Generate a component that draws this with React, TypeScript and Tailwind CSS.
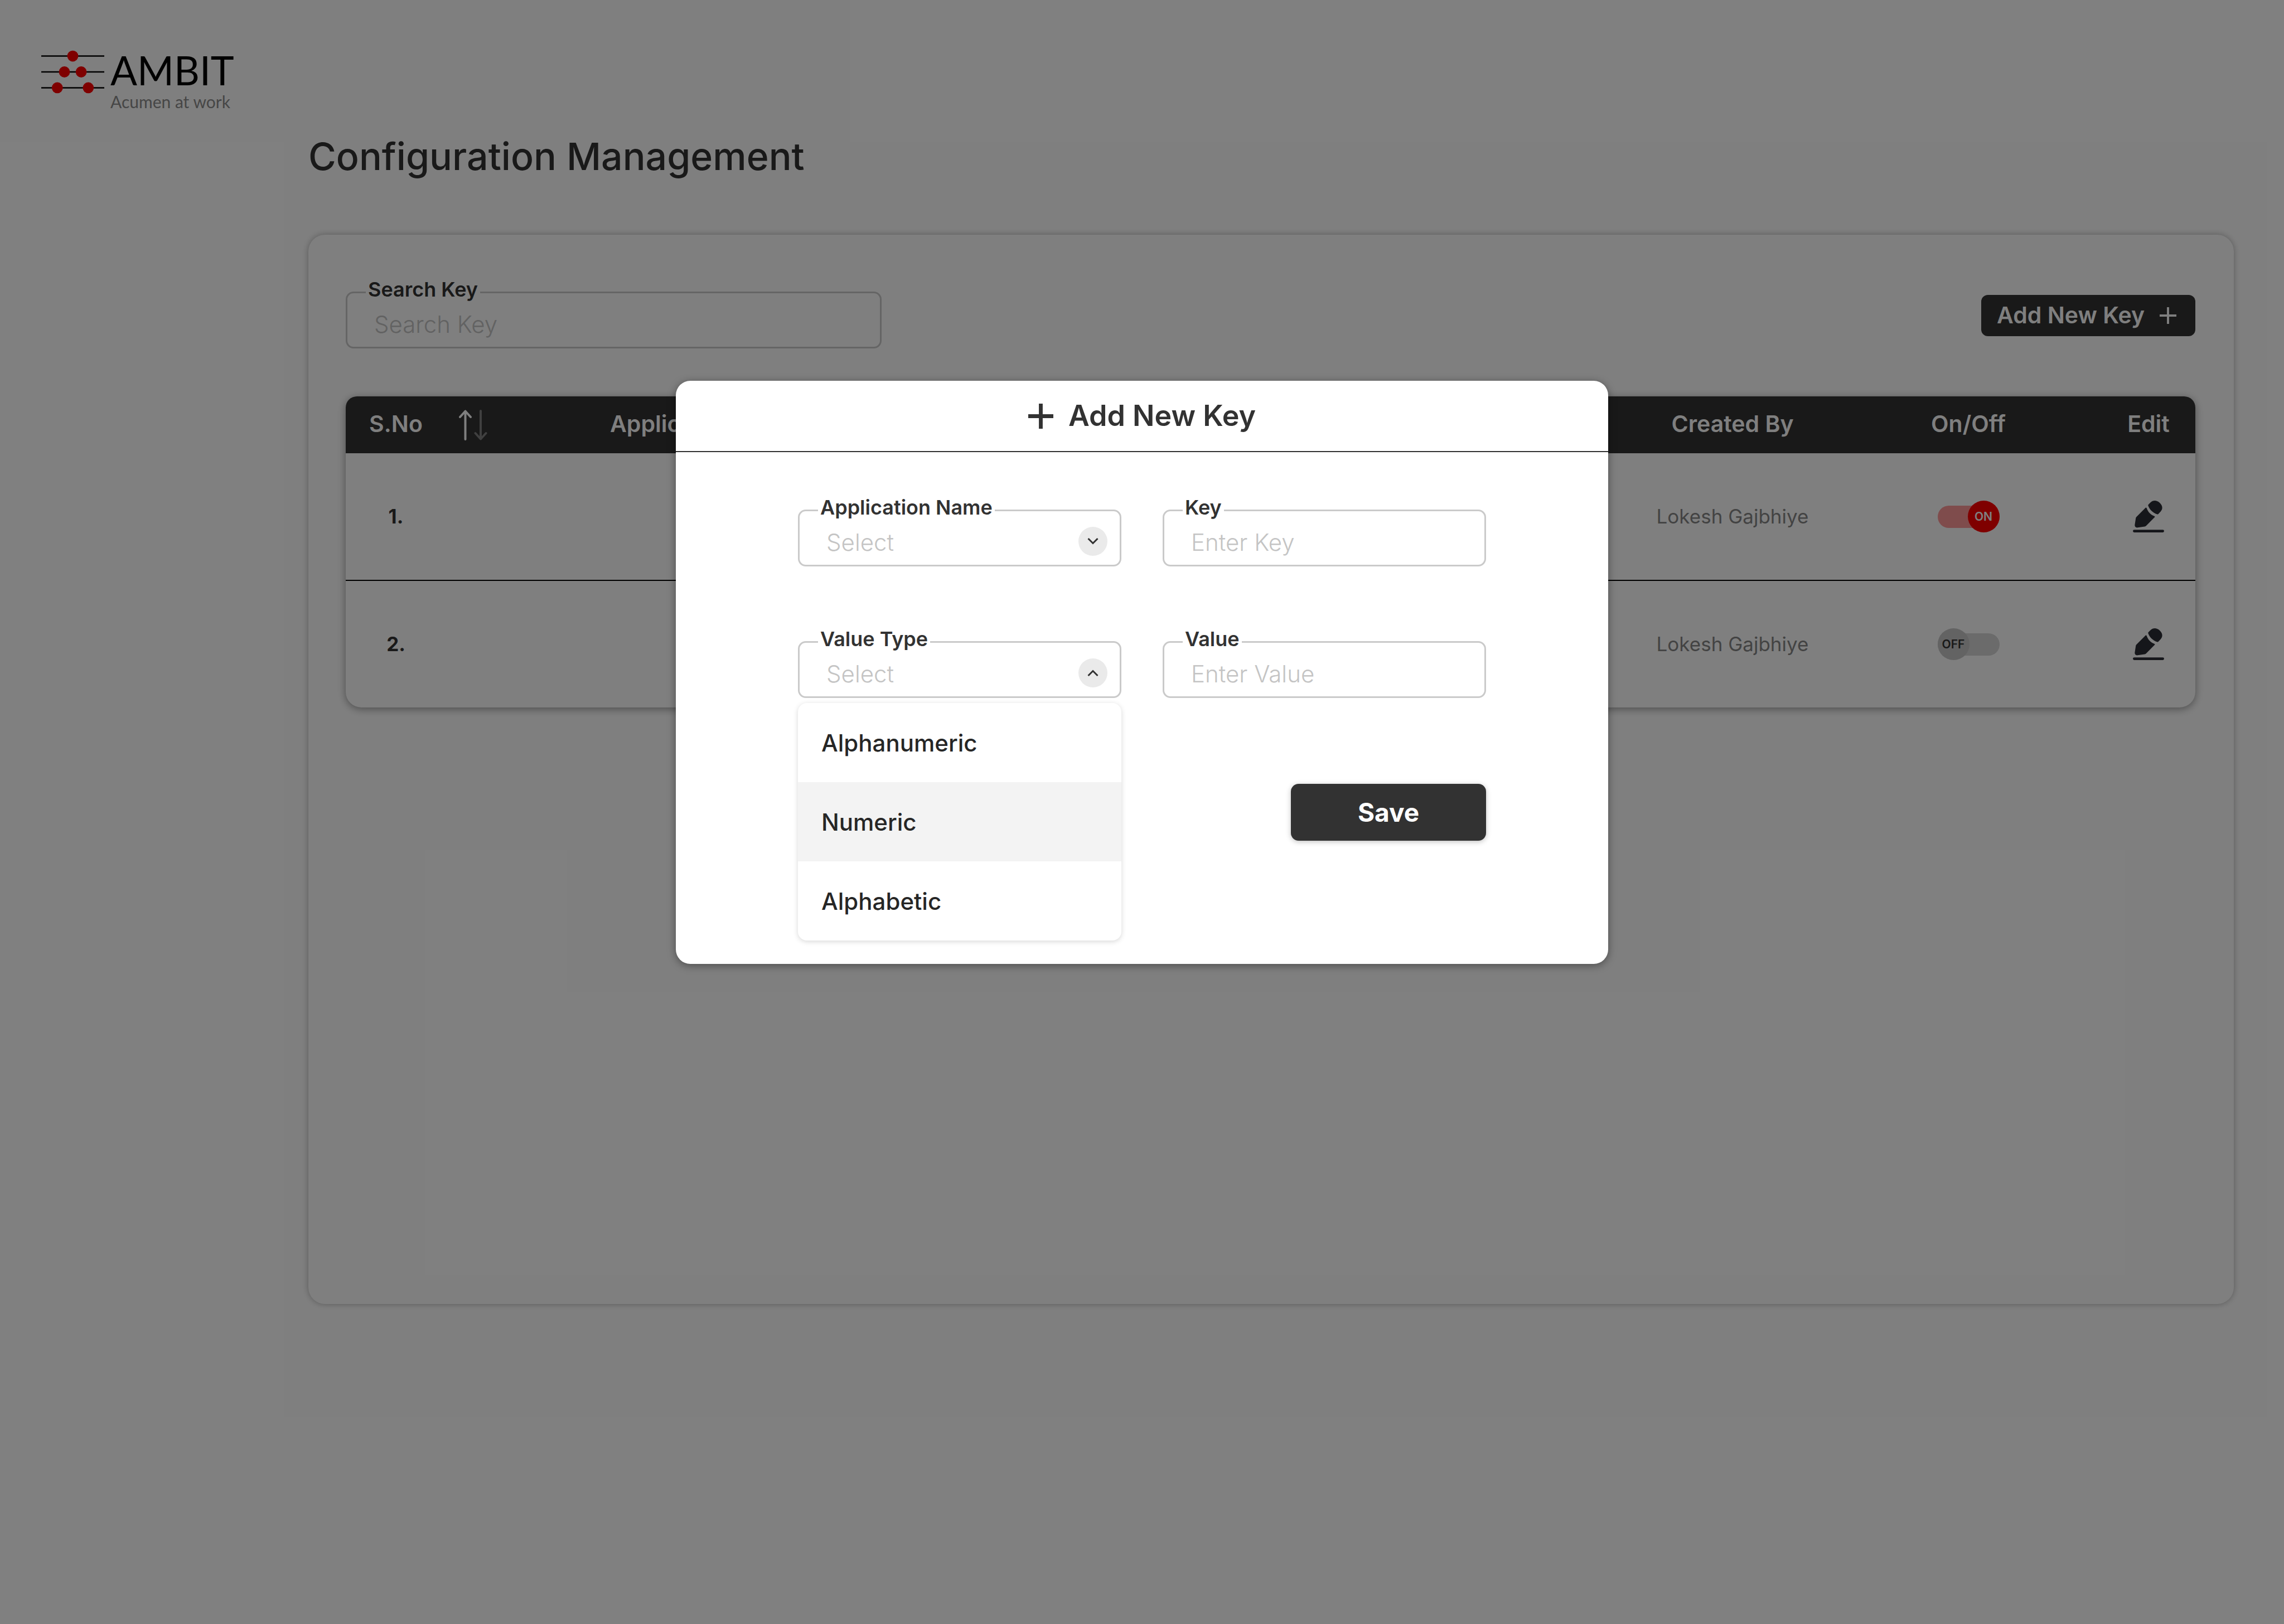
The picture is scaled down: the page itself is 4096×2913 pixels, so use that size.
import type { ReactNode } from "react";

const fieldBox =
  "block h-[102px] w-full appearance-none rounded-[14px] border-[3px] border-[#cacaca] bg-transparent pl-12 pr-20 pt-3.5 text-[42px] font-light text-[#c4c4c4] placeholder:text-[#c4c4c4] outline-none";

function Field({ id, label, children }: { id: string; label: string; children: ReactNode }) {
  return (
    <div className="relative">
      <label
        htmlFor={id}
        className="absolute -top-6 left-9 bg-white px-1 text-[36px] leading-10 font-semibold text-[#323232]"
      >
        {label}
      </label>
      {children}
    </div>
  );
}

function Plus({ className, width }: { className: string; width: number }) {
  return (
    <svg viewBox="0 0 46 46" className={className} aria-hidden="true">
      <path d="M23 0V46M0 23H46" stroke="currentColor" strokeWidth={width} />
    </svg>
  );
}

function Chevron({ up = false }: { up?: boolean }) {
  return (
    <span className="pointer-events-none absolute top-[31px] right-[25px] flex size-[52px] items-center justify-center rounded-full bg-[#eaeaea]">
      <svg viewBox="0 0 20 12" className="h-3 w-5" fill="none" stroke="#323232" strokeWidth="3" aria-hidden="true">
        <path d={up ? "M1.5 11L10 2.5L18.5 11" : "M1.5 1L10 9.5L18.5 1"} />
      </svg>
    </span>
  );
}

function Logo() {
  return (
    <a href="#" className="flex w-fit items-start gap-[11px]" aria-label="Ambit home">
      <svg viewBox="0 0 119 82" className="mt-1 h-[78px] w-[113px]" aria-hidden="true">
        <path d="M0 11H119M0 41H119M0 71H119" stroke="#000" strokeWidth="2.6" />
        <g fill="#f00">
          <circle cx="59.5" cy="11" r="10.4" />
          <circle cx="43.7" cy="41" r="10.4" />
          <circle cx="75.4" cy="41" r="10.4" />
          <circle cx="30.3" cy="71" r="10.4" />
          <circle cx="88.8" cy="71" r="10.4" />
        </g>
      </svg>
      <span className="flex flex-col font-['Lato']">
        <span className="text-[71px] leading-[80px] text-black">AMBIT</span>
        <span className="text-[30px] leading-8 text-[#8c8c8c]">Acumen at work</span>
      </span>
    </a>
  );
}

function Toggle({ on, label }: { on: boolean; label: string }) {
  return (
    <label className="relative mx-auto flex h-[57px] w-[111px] items-center">
      <input type="checkbox" role="switch" defaultChecked={on} aria-label={label} className="sr-only" />
      <span className={on ? "h-10 w-full rounded-full bg-[#ff9999]" : "h-10 w-full rounded-full bg-[#d6d6d6]"} />
      <span
        className={
          on
            ? "absolute right-0 flex size-[57px] items-center justify-center rounded-full bg-[#ff0000] text-[21px] font-semibold text-white"
            : "absolute left-0 flex size-[57px] items-center justify-center rounded-full bg-[#c6c6c6] text-[21px] font-semibold text-[#323232]"
        }
      >
        {on ? "ON" : "OFF"}
      </span>
    </label>
  );
}

function EditIcon() {
  return (
    <svg viewBox="0 0 59 60" className="h-[57px] w-14" fill="#2a2c34" aria-hidden="true">
      <path d="M29.6 7.2L33 3.6C38-1.2 45-1.2 50.5 4C56.5 9.8 56.8 15.5 52.5 20.5L48 25.2C47.2 26 46.4 26 45.4 25.6C37.5 22.5 31.5 17 28.9 9.4C28.6 8.5 28.9 7.9 29.6 7.2Z" />
      <path d="M23.7 13.7C24.5 12.9 25.7 13.1 26.1 14.2C28.6 21.5 33.5 26.6 40.5 29.3C41.7 29.8 41.9 30.6 41.1 31.4L25.2 47.5C24.3 48.4 23.5 48.8 22.3 49L9 50.9C5.5 51.3 3.2 49 3.6 45.6L5.5 33.2C5.7 32 6.1 31.3 6.9 30.5Z" />
      <rect x="0" y="55" width="59" height="5" rx="2.5" />
    </svg>
  );
}

const rows = [
  { no: "1.", by: "Lokesh Gajbhiye", on: true },
  { no: "2.", by: "Lokesh Gajbhiye", on: false },
];

const valueTypes = ["Alphanumeric", "Numeric", "Alphabetic"];

function KeyTable() {
  return (
    <div className="mt-[86px] overflow-hidden rounded-[28px] rounded-t-[20px] bg-white shadow-[0_3px_15px_rgba(0,0,0,0.4)]">
      <table className="w-full table-fixed border-collapse">
        <colgroup>
          <col className="w-[180px]" />
          <col className="w-[96px]" />
          <col />
          <col className="w-[368px]" />
          <col className="w-[478px]" />
          <col className="w-[168px]" />
        </colgroup>
        <thead>
          <tr className="h-[102px] bg-[#323232] text-[41px] leading-[48px] text-white">
            <th className="pb-1 font-semibold">S.No</th>
            <th>
              <button type="button" aria-label="Sort by serial number" className="mx-auto block">
                <svg viewBox="0 0 51 55" className="h-[55px] w-[51px]" fill="none" strokeWidth="4" strokeLinecap="round" strokeLinejoin="round">
                  <path d="M11.5 53V2.5M2 13L11.5 2.5L21 13" stroke="#fff" />
                  <path d="M39 2V52.5M29.5 42L39 52.5L48.5 42" stroke="#808080" />
                </svg>
              </button>
            </th>
            <th className="pb-1 pl-[198px] text-left font-semibold">Application Name</th>
            <th className="pb-1 font-semibold">Created By</th>
            <th className="pb-1 font-semibold">On/Off</th>
            <th className="pb-1 font-semibold">Edit</th>
          </tr>
        </thead>
        <tbody>
          {rows.map((r) => (
            <tr key={r.no} className="h-[228px] border-t-2 border-black text-center first:border-t-0">
              <td className="text-[35px] font-bold text-[#323232]">{r.no}</td>
              <td />
              <td />
              <td className="text-[35px] text-[#868686]">{r.by}</td>
              <td>
                <Toggle on={r.on} label={`Key ${r.no} enabled`} />
              </td>
              <td>
                <button type="button" aria-label={`Edit key ${r.no}`} className="mx-auto block">
                  <EditIcon />
                </button>
              </td>
            </tr>
          ))}
        </tbody>
      </table>
    </div>
  );
}

function AddKeyDialog() {
  return (
    <div className="absolute inset-0 flex items-start justify-center bg-black/50 pt-[683px]">
      <form
        role="dialog"
        aria-labelledby="dialog-title"
        className="w-[1672px] max-w-full rounded-[26px] bg-white pb-[221px] shadow-[0_3px_15px_rgba(0,0,0,0.4)]"
      >
        <div className="flex h-32 items-center justify-center gap-[27px] border-b-2 border-[#323232] text-[#323232]">
          <Plus className="size-[45px]" width={7} />
          <h2 id="dialog-title" className="text-[52px] leading-[60px] font-semibold">
            Add New Key
          </h2>
        </div>
        <div className="mx-[219px] mt-[103px] grid grid-cols-2 gap-x-[74px] gap-y-[134px]">
          <Field id="app-name" label="Application Name">
            <select id="app-name" className={fieldBox}>
              <option>Select</option>
            </select>
            <Chevron />
          </Field>
          <Field id="key" label="Key">
            <input id="key" placeholder="Enter Key" className={fieldBox} />
          </Field>
          <Field id="value-type" label="Value Type">
            <select id="value-type" className={fieldBox}>
              <option>Select</option>
            </select>
            <Chevron up />
            <ul
              role="listbox"
              aria-label="Value Type"
              className="absolute inset-x-0 top-[111px] overflow-hidden rounded-2xl bg-white shadow-[0_2px_10px_rgba(0,0,0,0.16)]"
            >
              {valueTypes.map((t) => (
                <li
                  key={t}
                  role="option"
                  aria-selected={t === "Numeric"}
                  className="flex h-[142px] items-center pl-[42px] text-[42px] font-medium text-[#262626] aria-selected:bg-[#f3f3f3]"
                >
                  {t}
                </li>
              ))}
            </ul>
          </Field>
          <Field id="value" label="Value">
            <input id="value" placeholder="Enter Value" className={fieldBox} />
          </Field>
        </div>
        <div className="mx-[219px] mt-[154px] flex justify-end">
          <button
            type="button"
            className="h-[102px] w-[350px] rounded-[14px] bg-[#323232] text-[46px] font-bold text-white shadow-[0_2px_10px_rgba(0,0,0,0.25)]"
          >
            Save
          </button>
        </div>
      </form>
    </div>
  );
}

export default function App() {
  return (
    <div className="relative flex min-h-screen flex-col bg-white pb-[574px] font-['Inter',sans-serif]">
      <header className="pt-[86px] pl-[74px]">
        <Logo />
      </header>
      <main className="mr-[90px] ml-[553px] flex flex-1 flex-col">
        <h1 className="mt-[42px] text-[68px] leading-[80px] font-medium text-[#323232]">Configuration Management</h1>
        <section className="mt-[101px] flex-1 rounded-[30px] bg-white pr-[69px] pl-[67px] pt-[102px] shadow-[0_0_12px_rgba(0,0,0,0.3)]">
          <div className="flex items-start justify-between">
            <div className="w-[961px]">
              <Field id="search" label="Search Key">
                <input id="search" placeholder="Search Key" className={fieldBox} />
              </Field>
            </div>
            <button
              type="button"
              className="mt-1.5 flex h-[74px] w-[384px] items-center justify-between rounded-xl bg-[#323232] pr-[34px] pl-7 text-[41px] font-semibold text-white"
            >
              Add New Key
              <Plus className="size-[30px]" width={6} />
            </button>
          </div>
          <KeyTable />
        </section>
      </main>
      <AddKeyDialog />
    </div>
  );
}
